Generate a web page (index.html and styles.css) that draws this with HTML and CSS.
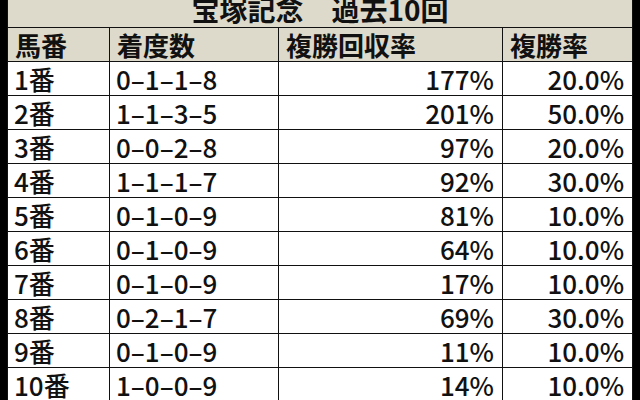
FILE: index.html
```html
<!DOCTYPE html>
<html lang="ja">
<head>
<meta charset="utf-8">
<link rel="stylesheet" href="styles.css">
</head>
<body>
<div class="frame">
<table class="stats">
  <colgroup>
    <col class="c1"><col class="c2"><col class="c3"><col class="c4">
  </colgroup>
  <thead>
    <tr class="title"><th colspan="4">宝塚記念　過去10回</th></tr>
    <tr class="head"><th>馬番</th><th>着度数</th><th>複勝回収率</th><th>複勝率</th></tr>
  </thead>
  <tbody>
    <tr><td>1番</td><td>0–1–1–8</td><td class="num">177%</td><td class="num">20.0%</td></tr>
    <tr><td>2番</td><td>1–1–3–5</td><td class="num">201%</td><td class="num">50.0%</td></tr>
    <tr><td>3番</td><td>0–0–2–8</td><td class="num">97%</td><td class="num">20.0%</td></tr>
    <tr><td>4番</td><td>1–1–1–7</td><td class="num">92%</td><td class="num">30.0%</td></tr>
    <tr><td>5番</td><td>0–1–0–9</td><td class="num">81%</td><td class="num">10.0%</td></tr>
    <tr><td>6番</td><td>0–1–0–9</td><td class="num">64%</td><td class="num">10.0%</td></tr>
    <tr><td>7番</td><td>0–1–0–9</td><td class="num">17%</td><td class="num">10.0%</td></tr>
    <tr><td>8番</td><td>0–2–1–7</td><td class="num">69%</td><td class="num">30.0%</td></tr>
    <tr><td>9番</td><td>0–1–0–9</td><td class="num">11%</td><td class="num">10.0%</td></tr>
    <tr><td>10番</td><td>1–0–0–9</td><td class="num">14%</td><td class="num">10.0%</td></tr>
  </tbody>
</table>
</div>
</body>
</html>
```

FILE: styles.css
```css
html, body {
  margin: 0;
  padding: 0;
  background: #000;
}
.frame {
  width: 640px;
  height: 400px;
  overflow: hidden;
  padding-left: 7px;
  box-sizing: border-box;
}
.stats {
  margin-top: -8px;
  width: 625px;
  border-collapse: collapse;
  table-layout: fixed;
  background: #fff;
  font-family: "Noto Sans CJK JP", "Noto Sans", sans-serif;
  color: #111;
}
.c1 { width: 102px; }
.c2 { width: 169px; }
.c3 { width: 224px; }
.c4 { width: 130px; }
.stats th, .stats td {
  border: 1px solid #111;
  height: 33px;
  padding: 0 7px;
  font-size: 26px;
  line-height: 1.2;
  vertical-align: middle;
  text-align: left;
  white-space: nowrap;
}
.stats td {
  font-weight: 500;
  padding-left: 6px;
}
.stats th {
  background: #dddacb;
  font-weight: 700;
}
.stats .title th {
  text-align: center;
  font-size: 28px;
}
.stats td.num {
  text-align: right;
  padding-right: 8px;
}
```
